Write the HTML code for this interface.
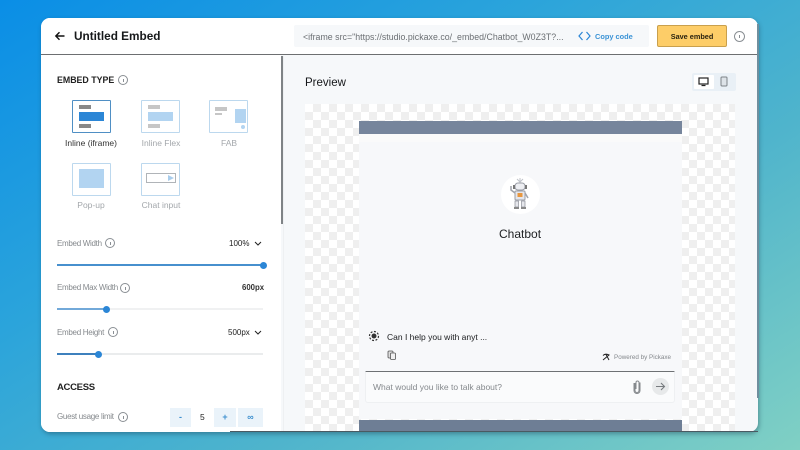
<!DOCTYPE html>
<html><head><meta charset="utf-8">
<style>
*{box-sizing:border-box;margin:0;padding:0}
html,body{width:800px;height:450px;overflow:hidden}
body{position:relative;font-family:"Liberation Sans",sans-serif;background:linear-gradient(148deg,#0a8ee6 0%,#2ba4db 35%,#4fb4cc 65%,#80d0c4 100%)}
.a{position:absolute}
.t{position:absolute;white-space:nowrap;line-height:12px}
#win{left:41px;top:18px;width:717px;height:414px;background:#f6f8fa;border-radius:9px;overflow:hidden;box-shadow:1px 2px 5px rgba(20,50,70,.4)}
.info{position:absolute;border:1px solid #8a8f94;border-radius:50%;width:10px;height:10px}
.info:after{content:"";position:absolute;left:3.5px;top:2.5px;width:1px;height:3.5px;background:#8a8f94}
.card{position:absolute;width:39px;height:33px;background:#fff;border:1.5px solid #bcd8ee;border-radius:1px}
.lbl{font-size:8.5px;color:#a3a7ab;text-align:center;width:70px;position:absolute}
.bar{position:absolute;background:#c6c6c6}
.blue{position:absolute;background:#b2d4f1}
.trk{position:absolute;left:16px;width:206px;height:2px;background:#eaeced}
.fil{position:absolute;left:16px;height:2px;background:#4790ce}
.dot{position:absolute;width:7px;height:7px;border-radius:50%;background:#2b86d6}
.g{font-size:8px;letter-spacing:-.3px;color:#85898d}
.v{font-size:8px;color:#222}
.btn{position:absolute;top:390px;height:19px;background:#eaf3fa;color:#3d8fcf;font-size:9px;font-weight:bold;text-align:center;line-height:19px}
</style></head>
<body>
<div id="win" class="a">
  <!-- sidebar -->
  <div class="a" style="left:0;top:37px;width:240px;height:377px;background:#fff"></div>
  <div class="a" style="left:240px;top:38px;width:2px;height:168px;background:#7f8386"></div>
  <div class="a" style="left:242px;top:38px;width:1px;height:376px;background:#eef0f2"></div>
  <!-- header -->
  <div class="a" style="left:0;top:0;width:717px;height:37px;background:#fff;border-bottom:1px solid #6d6f71"></div>
  <svg class="a" style="left:13px;top:12px" width="12" height="12" viewBox="0 0 12 12"><path d="M10.5 6H2M5.5 2.2 1.8 6l3.7 3.8" fill="none" stroke="#111" stroke-width="1.4"/></svg>
  <div class="t" style="left:33px;top:12px;font-size:11.8px;font-weight:bold;color:#17191b">Untitled Embed</div>
  <div class="a" style="left:253px;top:7px;width:355px;height:22px;background:#f6f8fa;border-radius:2px"></div>
  <div class="t" style="left:262px;top:12.500px;font-size:8.800px;letter-spacing:.02px;color:#6b6f73;width:264px;overflow:hidden">&lt;iframe src="https://studio.pickaxe.co/_embed/Chatbot_W0Z3T?...</div>
  <svg class="a" style="left:537px;top:13px" width="13" height="10" viewBox="0 0 13 10"><path d="M4.5 1 1 5l3.500 4M8.500 1 12 5 8.500 9" fill="none" stroke="#2b86d6" stroke-width="1.200"/></svg>
  <div class="t" style="left:554px;top:12.500px;font-size:7.400px;font-weight:bold;color:#3b93d6">Copy code</div>
  <div class="a" style="left:616px;top:7px;width:70px;height:22px;background:#fdcd68;border:1px solid #c9a04d;border-radius:2px;font-size:7.300px;font-weight:bold;color:#2a2310;text-align:center;line-height:21px">Save embed</div>
  <div class="info" style="left:693px;top:13px;width:11px;height:11px"></div>

  <!-- sidebar content -->
  <div class="t" style="left:16px;top:56px;font-size:8.800px;font-weight:bold;color:#222">EMBED TYPE</div>
  <div class="info" style="left:77px;top:57px"></div>

  <div class="card" style="left:31px;top:82px;border-color:#4f8fc4"></div>
  <div class="bar" style="left:38px;top:87px;width:12px;height:4px;background:#888"></div>
  <div class="a" style="left:38px;top:94px;width:25px;height:9px;background:#2b86d6"></div>
  <div class="bar" style="left:38px;top:106px;width:12px;height:4px;background:#888"></div>
  <div class="lbl" style="left:15px;top:120px;color:#333">Inline (iframe)</div>

  <div class="card" style="left:100px;top:82px"></div>
  <div class="bar" style="left:107px;top:87px;width:12px;height:4px"></div>
  <div class="blue" style="left:107px;top:94px;width:25px;height:9px"></div>
  <div class="bar" style="left:107px;top:106px;width:12px;height:4px"></div>
  <div class="lbl" style="left:85px;top:120px">Inline Flex</div>

  <div class="card" style="left:168px;top:82px"></div>
  <div class="bar" style="left:174px;top:89px;width:12px;height:4px"></div>
  <div class="bar" style="left:174px;top:95px;width:7px;height:2px"></div>
  <div class="blue" style="left:194px;top:91px;width:11px;height:14px"></div>
  <div class="blue" style="left:200px;top:107px;width:4px;height:4px;border-radius:50%"></div>
  <div class="lbl" style="left:153px;top:120px">FAB</div>

  <div class="card" style="left:31px;top:145px"></div>
  <div class="blue" style="left:38px;top:151px;width:25px;height:19px"></div>
  <div class="lbl" style="left:15px;top:182px">Pop-up</div>

  <div class="card" style="left:100px;top:145px"></div>
  <div class="a" style="left:105px;top:155px;width:30px;height:10px;border:1px solid #b0b4b8"></div>
  <div class="a" style="left:127px;top:157px;width:0;height:0;border-left:6px solid #a9cdec;border-top:3px solid transparent;border-bottom:3px solid transparent"></div>
  <div class="lbl" style="left:85px;top:182px">Chat input</div>

  <div class="t g" style="left:16px;top:219.500px">Embed Width</div>
  <div class="info" style="left:64px;top:220px"></div>
  <div class="t v" style="left:188px;top:219.500px">100%</div>
  <svg class="a" style="left:213px;top:223px" width="8" height="6"><path d="M1 1l3 3 3-3" fill="none" stroke="#222"/></svg>
  <div class="trk" style="top:246px"></div><div class="fil" style="top:246px;width:206px"></div>
  <div class="dot" style="left:219px;top:244px"></div>

  <div class="t g" style="left:16px;top:264px">Embed Max Width</div>
  <div class="info" style="left:79px;top:265px"></div>
  <div class="t v" style="left:201px;top:264px;font-weight:bold;color:#333;font-size:7.800px">600px</div>
  <div class="trk" style="top:290px;background:#f0f1f2"></div><div class="fil" style="top:290px;width:50px;background:#72a9d9"></div>
  <div class="dot" style="left:62px;top:288px"></div>

  <div class="t g" style="left:16px;top:308.500px">Embed Height</div>
  <div class="info" style="left:67px;top:309px"></div>
  <div class="t v" style="left:187px;top:308.500px">500px</div>
  <svg class="a" style="left:213px;top:312px" width="8" height="6"><path d="M1 1l3 3 3-3" fill="none" stroke="#222"/></svg>
  <div class="trk" style="top:335px"></div><div class="fil" style="top:335px;width:42px;background:#3d80bd"></div>
  <div class="dot" style="left:54px;top:333px"></div>

  <div class="t" style="left:16px;top:364px;font-size:9.500px;letter-spacing:-.3px;font-weight:bold;color:#222">ACCESS</div>
  <div class="t g" style="left:16px;top:393px">Guest usage limit</div>
  <div class="info" style="left:77px;top:394px"></div>
  <div class="btn" style="left:129px;width:21px">-</div>
  <div class="t" style="left:159px;top:393px;font-size:8.500px;color:#222">5</div>
  <div class="btn" style="left:173px;width:22px">+</div>
  <div class="btn" style="left:197px;width:25px">∞</div>

  <!-- preview -->
  <div class="t" style="left:264px;top:59px;font-size:11.500px;color:#15171a">Preview</div>
  <div class="a" style="left:651px;top:55px;width:44px;height:18px;background:#e9f0f6;border-radius:2px"></div>
  <div class="a" style="left:653px;top:57px;width:20px;height:14px;background:#fff;border-radius:1px"></div>
  <svg class="a" style="left:657px;top:59px" width="12" height="10" viewBox="0 0 12 10"><rect x="1" y="1" width="9" height="6" fill="none" stroke="#222" stroke-width="1.200"/><path d="M3.500 8.500h4" stroke="#222" stroke-width="1.200"/></svg>
  <svg class="a" style="left:679px;top:58px" width="8" height="11" viewBox="0 0 8 11"><rect x="1" y="1" width="6" height="9" rx="1" fill="#dde3e8" stroke="#7d8388"/></svg>

  <div class="a" style="left:264px;top:86px;width:430px;height:328px;background:repeating-conic-gradient(#efefef 0 25%,#fff 0 50%) 0 0/16px 16px"></div>
  <div class="a" style="left:318px;top:103px;width:323px;height:13px;background:#76859c"></div>
  <div class="a" style="left:318px;top:116px;width:323px;height:285px;background:#f7f8fa;border-top:8px solid #fafafa"></div>
  <div class="a" style="left:318px;top:402px;width:323px;height:12px;background:#6e7e95"></div>

  <div class="a" style="left:460px;top:157px;width:39px;height:39px;background:#fff;border-radius:50%"></div>
  <svg class="a" style="left:466px;top:159px" width="26" height="33" viewBox="0 0 26 33">
    <path d="M13 1v5M10 2l3 3 3-3" stroke="#c0c3ca" fill="none"/>
    <rect x="8" y="6" width="10" height="7" rx="3" fill="#eeeff3" stroke="#9a9da6"/>
    <rect x="6" y="8" width="2" height="4" fill="#777"/><rect x="18" y="8" width="2" height="4" fill="#777"/>
    <rect x="8" y="14" width="10" height="9" rx="1" fill="#e5e6ec" stroke="#9a9da6"/>
    <rect x="10.500" y="16" width="5" height="4" fill="#e8973f"/>
    <path d="M8 16 4 13V9M18 16l3 5" stroke="#a0a3ac" stroke-width="1.500" fill="none"/>
    <rect x="8" y="24" width="3.500" height="6" fill="#e6e7ec" stroke="#8b8e98" stroke-width=".7"/><rect x="14.500" y="24" width="3.500" height="6" fill="#e6e7ec" stroke="#8b8e98" stroke-width=".7"/>
    <rect x="7" y="30" width="5" height="2" fill="#888"/><rect x="14" y="30" width="5" height="2" fill="#888"/>
  </svg>
  <div class="t" style="left:458px;top:210px;font-size:12px;color:#1e2022">Chatbot</div>

  <svg class="a" style="left:327px;top:312px" width="12" height="12" viewBox="0 0 12 12"><circle cx="6" cy="6" r="2.500" fill="#333"/><circle cx="6" cy="6" r="4.500" fill="none" stroke="#333" stroke-dasharray="2 1.500" stroke-width="1.200"/></svg>
  <div class="t" style="left:346px;top:312.500px;font-size:8.500px;color:#1a1c1e">Can I help you with anyt ...</div>
  <svg class="a" style="left:346px;top:332px" width="10" height="11" viewBox="0 0 10 11"><rect x="1" y="1" width="5" height="7" rx="1" fill="#ddd" stroke="#555" stroke-width=".8"/><rect x="3.500" y="3" width="5" height="6.500" rx="1" fill="#f0f0f0" stroke="#555" stroke-width=".8"/></svg>
  <svg class="a" style="left:561px;top:335px" width="8" height="8" viewBox="0 0 8 8"><path d="M1 2.500C3 .5 5 1 7 2L1 7M4 1.500 7 7" fill="none" stroke="#222" stroke-width="1"/></svg>
  <div class="t" style="left:573px;top:334px;font-size:6.300px;color:#84888c">Powered by Pickaxe</div>

  <div class="a" style="left:324px;top:353px;width:310px;height:32px;background:#fafbfc;border:1px solid #eef0f2;border-top:1px solid #6e7174;border-radius:0 0 3px 3px"></div>
  <div class="t" style="left:332px;top:363px;font-size:8.500px;color:#85898d">What would you like to talk about?</div>
  <svg class="a" style="left:591px;top:361px" width="10" height="15" viewBox="0 0 10 15"><path d="M3 4v7.500a2 2 0 0 0 4 0V3.500a1.500 1.500 0 0 0-3 0V10" fill="none" stroke="#85898d" stroke-width="1"/><path d="M2 4v7.500a3 3 0 0 0 6 0V3.500" fill="none" stroke="#85898d"/></svg>
  <div class="a" style="left:611px;top:360px;width:17px;height:17px;background:#e7e9ea;border-radius:50%"></div>
  <svg class="a" style="left:614px;top:363px" width="11" height="11" viewBox="0 0 11 11"><path d="M1 5.500h8.500M6 2l3.500 3.500L6 9" fill="none" stroke="#777b7f" stroke-width="1.100"/></svg>
</div>
<!-- right-edge shadow -->
<div class="a" style="left:757px;top:24px;width:2px;height:374px;background:#6f8f9e"></div>
<div class="a" style="left:230px;top:431px;width:528px;height:1px;background:#4a5a62"></div>
</body></html>
